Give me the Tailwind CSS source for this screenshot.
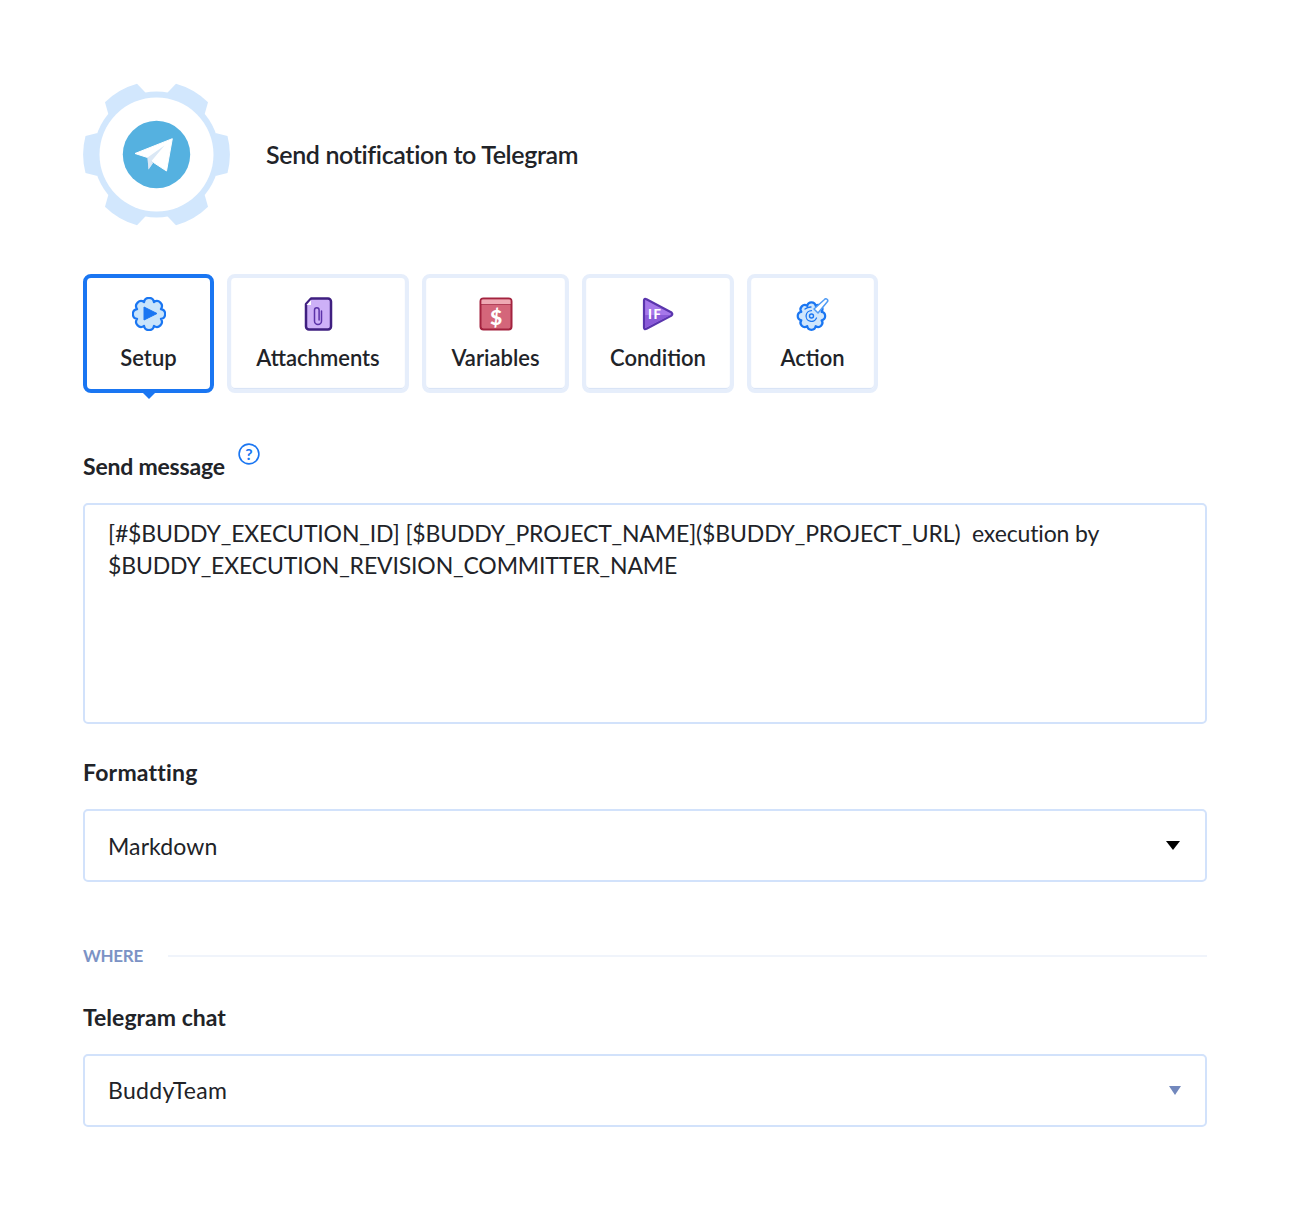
<!DOCTYPE html>
<html lang="en">
<head>
  <meta charset="UTF-8" />
  <meta name="viewport" content="width=device-width, initial-scale=1.0" />
  <script src="https://cdn.jsdelivr.net/npm/@tailwindcss/browser@4"></script>
  <title>Send notification to Telegram</title>
</head>
<body class="bg-white font-['Lato',sans-serif] text-[#212328] antialiased">
  <div class="w-[1294px] h-[1216px] pl-[83px] pr-[87px] pt-[83px]">

    <!-- Header -->
    <div class="flex items-center h-[143px]">
      <svg class="w-[147px] h-[143px] shrink-0" viewBox="-73.5 -71.5 147 143">
        <g fill="#d2e7fd">
          <circle r="63" />
          <path d="M59 -21.5L71 -18.5A73.500 73.500 0 0 1 71 18.5L59 21.5Z" />
          <path d="M59 -21.5L71 -18.5A73.500 73.500 0 0 1 71 18.5L59 21.5Z" transform="rotate(60)" />
          <path d="M59 -21.5L71 -18.5A73.500 73.500 0 0 1 71 18.5L59 21.5Z" transform="rotate(120)" />
          <path d="M59 -21.5L71 -18.5A73.500 73.500 0 0 1 71 18.5L59 21.5Z" transform="rotate(180)" />
          <path d="M59 -21.5L71 -18.5A73.500 73.500 0 0 1 71 18.5L59 21.5Z" transform="rotate(240)" />
          <path d="M59 -21.5L71 -18.5A73.500 73.500 0 0 1 71 18.5L59 21.5Z" transform="rotate(300)" />
        </g>
        <circle r="57" fill="#fff" />
        <circle r="33.7" fill="#55b1e0" />
        <path d="M-21.5 -1L15.8 -15.8L10 16.5L-3 8L-9 3Z" fill="#fff" stroke="#fff" stroke-width="1" stroke-linejoin="round" />
        <path d="M-9 3L-8 15L-3.5 8.5Z" fill="#c5d8ee" />
        <path d="M-9 3L8 -9L-5 6.5L-3.5 8.5L-8 15Z" fill="#dbe8f5" />
      </svg>
      <h1 class="ml-[36px] text-[25px] font-semibold tracking-[-0.36px]">Send notification to Telegram</h1>
    </div>

    <!-- Tabs -->
    <div class="flex gap-[13px] mt-[48px]">
      <div class="relative w-[131px] h-[119px] flex flex-col items-center rounded-[8px] border-[4px] border-[#1a76f2] pt-[19px]">
        <svg class="w-[34px] h-[34px]" viewBox="0 0 34 34">
          <path d="M12.060 5.080A5 5 0 0 1 21.940 5.080A5 5 0 0 1 28.920 12.060A5 5 0 0 1 28.920 21.940A5 5 0 0 1 21.940 28.920A5 5 0 0 1 12.060 28.920A5 5 0 0 1 5.080 21.940A5 5 0 0 1 5.080 12.060A5 5 0 0 1 12.060 5.080Z" fill="#c9e4fb" stroke="#1a76f2" stroke-width="2.200" stroke-linejoin="round" />
          <path d="M12 10L25 16.500L12 23Z" fill="#1a76f2" stroke="#1a76f2" stroke-width="1" stroke-linejoin="round" />
        </svg>
        <span class="mt-[12px] text-[22px] leading-[30px] font-semibold">Setup</span>
        <div class="absolute left-1/2 -bottom-[10px] -translate-x-1/2 w-0 h-0 border-x-[7px] border-x-transparent border-t-[7px] border-t-[#1a76f2]"></div>
      </div>

      <div class="w-[182px] h-[119px] flex flex-col items-center rounded-[8px] border-[4px] border-[#e6eefb] shadow-[inset_0_-1px_1px_#d5e1f5] pt-[19px]">
        <svg class="w-[34px] h-[34px]" viewBox="0 0 34 34">
          <path d="M10 1.500H27a3 3 0 0 1 3 3V29.500a3 3 0 0 1-3 3H8a3 3 0 0 1-3-3V7Z" fill="#cdb0f7" stroke="#3f1f80" stroke-width="2.500" stroke-linejoin="round" />
          <path d="M10 3V8H5.500Z" fill="#fff" />
          <path d="M20.500 14V24a3.500 3.500 0 0 1-7 0V13a2.300 2.300 0 0 1 4.600 0V23" fill="none" stroke="#5b33a8" stroke-width="1.500" stroke-linecap="round" />
        </svg>
        <span class="mt-[12px] text-[22px] leading-[30px] font-semibold">Attachments</span>
      </div>

      <div class="w-[147px] h-[119px] flex flex-col items-center rounded-[8px] border-[4px] border-[#e6eefb] shadow-[inset_0_-1px_1px_#d5e1f5] pt-[19px]">
        <svg class="w-[34px] h-[34px]" viewBox="0 0 34 34">
          <rect x="1.500" y="1.500" width="31" height="31" rx="3" fill="#d4667a" stroke="#a3233f" stroke-width="2" />
          <path d="M2.500 3.500a1 1 0 0 1 1-1H30.500a1 1 0 0 1 1 1V7H2.500Z" fill="#eeaab4" />
          <path d="M2.500 7.500H31.500" stroke="#8f1d38" stroke-width="1" stroke-dasharray="1 1" />
          <text x="17" y="27.500" text-anchor="middle" font-family="Lato, sans-serif" font-size="21" font-weight="900" fill="#fff">$</text>
        </svg>
        <span class="mt-[12px] text-[22px] leading-[30px] font-semibold">Variables</span>
      </div>

      <div class="w-[152px] h-[119px] flex flex-col items-center rounded-[8px] border-[4px] border-[#e6eefb] shadow-[inset_0_-1px_1px_#d5e1f5] pt-[19px]">
        <svg class="w-[34px] h-[34px]" viewBox="0 0 34 34">
          <path d="M3 3.500Q3 1 5.500 2.200L30.500 15.500Q32 17 30.500 18.500L5.500 31.800Q3 33 3 30.500Z" fill="#a678ea" stroke="#5a35ad" stroke-width="2.200" stroke-linejoin="round" />
          <path d="M4 31V18H30Z" fill="#8a5ad8" />
          <text x="7" y="22" font-family="Lato, sans-serif" font-size="13" font-weight="900" letter-spacing="1.500" fill="#fff">IF</text>
        </svg>
        <span class="mt-[12px] text-[22px] leading-[30px] font-semibold">Condition</span>
      </div>

      <div class="w-[131px] h-[119px] flex flex-col items-center rounded-[8px] border-[4px] border-[#e6eefb] shadow-[inset_0_-1px_1px_#d5e1f5] pt-[19px]">
        <svg class="w-[34px] h-[34px]" viewBox="0 0 34 34">
          <path transform="translate(1 4.600) scale(.85)" d="M12.060 5.080A5 5 0 0 1 21.940 5.080A5 5 0 0 1 28.920 12.060A5 5 0 0 1 28.920 21.940A5 5 0 0 1 21.940 28.920A5 5 0 0 1 12.060 28.920A5 5 0 0 1 5.080 21.940A5 5 0 0 1 5.080 12.060A5 5 0 0 1 12.060 5.080Z" fill="#cfe6fc" stroke="#1a76f2" stroke-width="2.600" stroke-linejoin="round" />
          <path d="M18 12L28.500 2.500a1.800 1.800 0 0 1 2.800 2.300L22 16Z" fill="#fff" stroke="#4f9bf5" stroke-width="1.500" stroke-linejoin="round" />
          <circle cx="15.500" cy="19" r="2" fill="none" stroke="#1a76f2" stroke-width="1.400" />
          <path d="M20.500 21a5.400 5.400 0 1 1-5-7.400M9 12a9.500 9.500 0 0 1 6-2" fill="none" stroke="#1a76f2" stroke-width="1.300" stroke-linecap="round" />
        </svg>
        <span class="mt-[12px] text-[22px] leading-[30px] font-semibold">Action</span>
      </div>
    </div>

    <!-- Send message -->
    <div class="flex mt-[57px] h-[53px]">
      <label class="text-[23px] leading-[34px] font-bold tracking-[-0.2px] -mt-[1px]">Send message</label>
      <svg class="w-[22px] h-[22px] ml-[13px] -mt-[7px]" viewBox="0 0 22 22">
        <circle cx="11" cy="11" r="9.900" fill="none" stroke="#1a76f2" stroke-width="1.600" />
        <text x="11" y="16.500" text-anchor="middle" font-family="Lato, sans-serif" font-size="16" font-weight="700" fill="#1a76f2">?</text>
      </svg>
    </div>
    <div class="h-[221px] rounded-[5px] border-2 border-[#d2e2fb] px-[23px] pt-[12px] text-[23px] leading-[32px] tracking-[-0.145px] whitespace-pre-wrap">[#$BUDDY_EXECUTION_ID] [$BUDDY_PROJECT_NAME]($BUDDY_PROJECT_URL)  execution by
$BUDDY_EXECUTION_REVISION_COMMITTER_NAME</div>

    <!-- Formatting -->
    <label class="block mt-[31px] text-[23px] leading-[34px] font-bold tracking-[0.2px]">Formatting</label>
    <div class="mt-[20px] h-[73px] rounded-[5px] border-2 border-[#d2e2fb] pl-[23px] pr-[25px] flex items-center justify-between text-[23px] tracking-[0.1px]">
      <span class="mt-[1px]">Markdown</span>
      <div class="w-0 h-0 border-x-[7px] border-x-transparent border-t-[9px] border-t-black"></div>
    </div>

    <!-- Where -->
    <div class="flex items-center mt-[61px] h-[26px]">
      <span class="text-[17px] font-bold text-[#7c93c5] tracking-[-0.3px]">WHERE</span>
      <div class="flex-1 h-[2px] bg-[#f0f4fb] ml-[25px]"></div>
    </div>

    <!-- Telegram chat -->
    <label class="block mt-[31px] text-[23px] leading-[34px] font-bold tracking-[0.03px]">Telegram chat</label>
    <div class="mt-[20px] h-[73px] rounded-[5px] border-2 border-[#d2e2fb] pl-[23px] pr-[24px] flex items-center justify-between text-[23px] tracking-[0.3px]">
      <span>BuddyTeam</span>
      <div class="w-0 h-0 border-x-[6px] border-x-transparent border-t-[9px] border-t-[#7288bd]"></div>
    </div>
  </div>
</body>
</html>
